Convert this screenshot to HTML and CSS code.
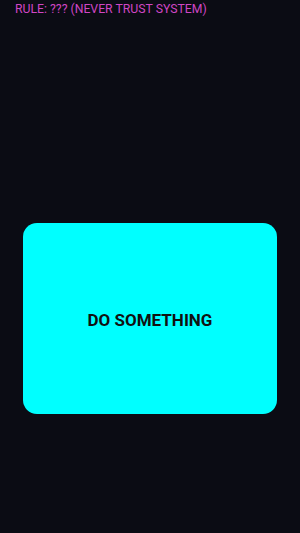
FILE: index.html
```html
<!DOCTYPE html>
<html lang="en">

<head>
    <meta charset="UTF-8">
    <meta name="viewport" content="width=device-width, initial-scale=1.0">
    <title>Do Something</title>
    <link rel="stylesheet" href="styles.css">
</head>

<body>
    <div class="rule-label">RULE: ??? (NEVER TRUST SYSTEM)</div>

    <div class="stage">
        <button class="action-button">DO SOMETHING</button>
    </div>
</body>

</html>
```

FILE: styles.css
```css
html, body {
    height: 100%;
}

body {
    font-family: Roboto, "Liberation Sans", sans-serif;
    margin: 0;
    background-color: #0b0c14;
}

.rule-label {
    padding: 1px 15px 0;
    font-size: 12.25px;
    line-height: 16px;
    color: #d046c4;
}

.stage {
    padding: 206px 23px 0;
}

.action-button {
    display: flex;
    align-items: center;
    justify-content: center;
    width: 100%;
    height: 191px;
    padding: 2px 0 0;
    background-color: #00ffff;
    color: #111;
    font-family: inherit;
    font-size: 17px;
    font-weight: bold;
    border: none;
    border-radius: 14px;
    cursor: pointer;
}
```
